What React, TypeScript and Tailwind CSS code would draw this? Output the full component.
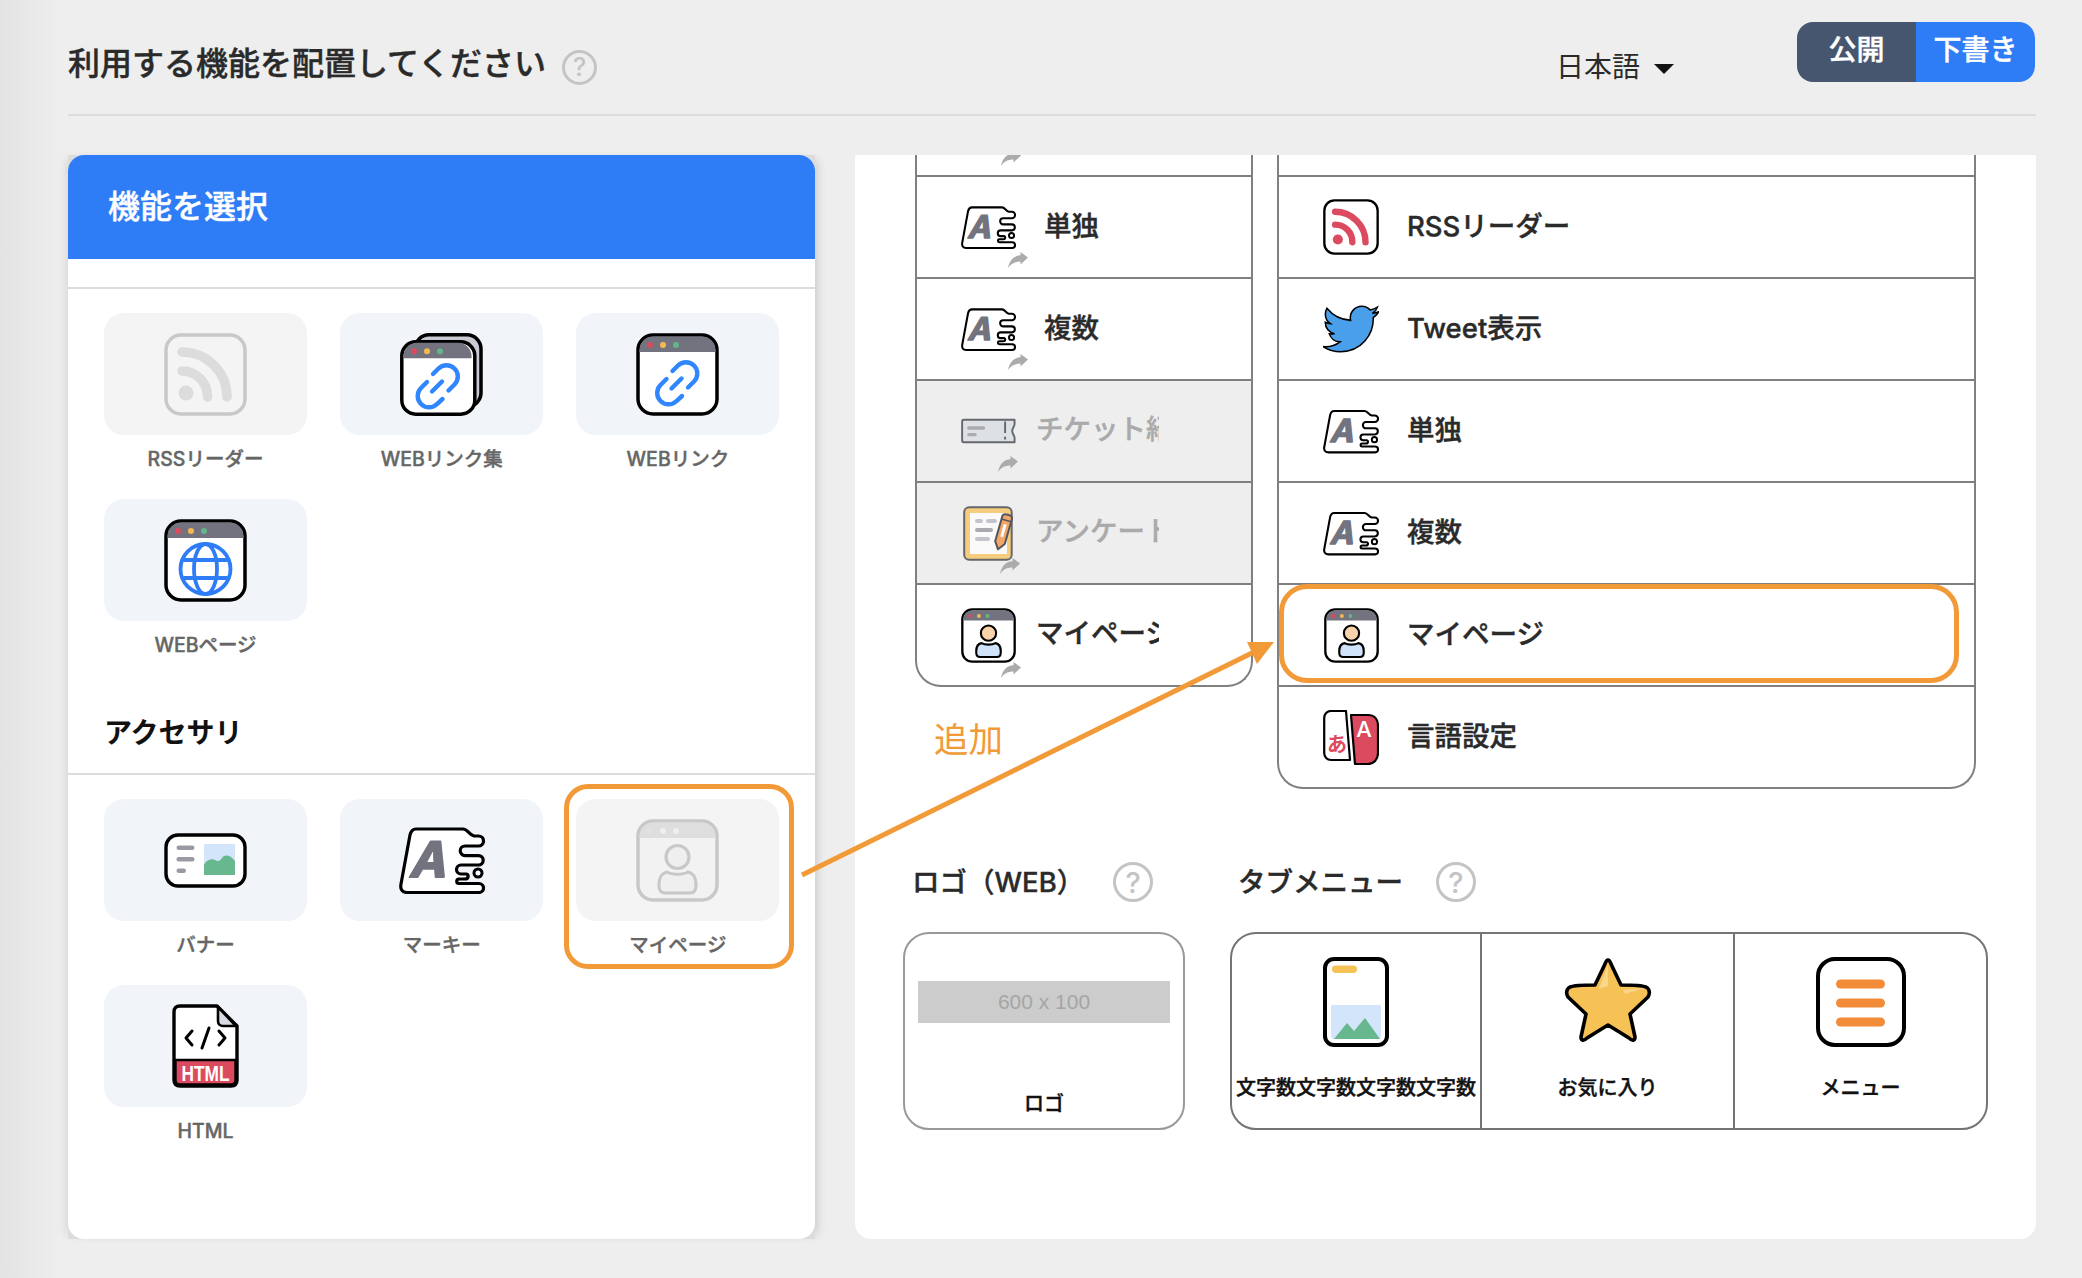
import React from "react";
import { FaTwitter } from "react-icons/fa";

const RED = "#dc4a60";
const ORANGE = "#f39a38";
// the CJK family has no real medium cut here, so thicken the regular a little
const MEDIUM = "font-medium [-webkit-text-stroke:0.4px]";

function TitleBar({ muted, width = 83, dx = 0, dy = 0 }: { muted?: boolean; width?: number; dx?: number; dy?: number }) {
  const w = width;
  return (
    <g transform={`translate(${dx} ${dy})`}>
      <path d={`M3.5 19V17A13.5 13.5 0 0 1 17 3.5H${w - 17}A13.5 13.5 0 0 1 ${w - 3.5} 17V19Z`} fill={muted ? "#dedede" : "#72737f"} />
      <circle cx="14" cy="12" r="3" fill={muted ? "#e2e2e2" : RED} />
      <circle cx="27" cy="12" r="3" fill={muted ? "#efefef" : "#f6b94f"} />
      <circle cx="40" cy="12" r="3" fill={muted ? "#efefef" : "#62b78a"} />
    </g>
  );
}

function Chain({ dx = 0, dy = 0 }: { dx?: number; dy?: number }) {
  return (
    <g transform={`translate(${dx} ${dy})`} fill="none" stroke="#2f86ff" strokeWidth="4.4" strokeLinecap="round">
      <path d="M52 54.5L58 48.5A11.3 11.3 0 0 0 42 32.5L36.5 38" />
      <path d="M30.5 46L24.5 52A11.3 11.3 0 0 0 40.5 68L46 63" />
      <path d="M35.5 55.5L45.5 45.5" />
    </g>
  );
}

function RssArcs({ color }: { color: string }) {
  return (
    <g fill="none" stroke={color} strokeWidth="9.5" strokeLinecap="round">
      <path d="M18 38A25.5 25.5 0 0 1 43.5 64" />
      <path d="M18 19A45 45 0 0 1 63 64" />
      <circle cx="22" cy="60" r="7.5" fill={color} stroke="none" />
    </g>
  );
}

function RssIcon({ muted, size = 83 }: { muted?: boolean; size?: number }) {
  return (
    <svg width={size} height={size} viewBox="0 0 83 83">
      <rect x="2" y="2" width="79" height="79" rx="15" fill={muted ? "#f4f4f4" : "#fff"} stroke={muted ? "#c8c8c8" : "#000"} strokeWidth="3.5" />
      <RssArcs color={muted ? "#dcdcdc" : RED} />
    </svg>
  );
}

function LinkSetIcon() {
  return (
    <svg width="83" height="83" viewBox="0 0 83 83">
      <rect x="15" y="1.8" width="66" height="72" rx="14" fill="#c9cad3" stroke="#000" strokeWidth="3.5" />
      <rect x="1.8" y="8.8" width="73" height="72.4" rx="14" fill="#fff" stroke="#000" strokeWidth="3.5" />
      <TitleBar width={75} dx={0} dy={6.3} />
      <Chain dx={-3.5} dy={3} />
    </svg>
  );
}

function LinkIcon() {
  return (
    <svg width="83" height="83" viewBox="0 0 83 83">
      <rect x="2" y="2" width="79" height="79" rx="15" fill="#fff" stroke="#000" strokeWidth="3.5" />
      <TitleBar />
      <Chain />
    </svg>
  );
}

function GlobeIcon() {
  return (
    <svg width="83" height="83" viewBox="0 0 83 83">
      <rect x="2" y="2" width="79" height="79" rx="15" fill="#fff" stroke="#000" strokeWidth="3.5" />
      <TitleBar />
      <g fill="none" stroke="#2f7df6" strokeWidth="3.8">
        <circle cx="41.5" cy="50" r="25" />
        <ellipse cx="41.5" cy="50" rx="11.5" ry="25" />
        <path d="M19.5 41H63.5M19.5 59H63.5" />
      </g>
    </svg>
  );
}

function PageUserIcon({ muted, size = 83 }: { muted?: boolean; size?: number }) {
  const line = muted ? "#c8c8c8" : "#000";
  return (
    <svg width={size} height={size} viewBox="0 0 83 83">
      <rect x="2" y="2" width="79" height="79" rx="15" fill={muted ? "#f2f2f2" : "#fff"} stroke={line} strokeWidth="3.5" />
      <TitleBar muted={muted} />
      <circle cx="41.5" cy="38" r="11.5" fill={muted ? "#efefef" : "#f8d2ab"} stroke={line} strokeWidth="3.2" />
      <path d="M31 53C36 56 47 56 52 53C57 54 60 59 60 65V67C60 71 58 74 54 74H29C25 74 23 71 23 67V65C23 59 26 54 31 53Z" fill={muted ? "#efefef" : "#cfe3fb"} stroke={line} strokeWidth="3.2" />
    </svg>
  );
}

function BannerIcon() {
  return (
    <svg width="83" height="55" viewBox="0 0 83 55">
      <rect x="2" y="2" width="79" height="51" rx="12" fill="#fff" stroke="#000" strokeWidth="3.4" />
      <g fill="#9a9aa5">
        <rect x="12.5" y="12.5" width="18" height="4.6" rx="2.3" />
        <rect x="12.5" y="24" width="18" height="4.6" rx="2.3" />
        <rect x="12.5" y="35.5" width="9.5" height="4.6" rx="2.3" />
      </g>
      <rect x="40" y="11" width="31" height="31" rx="1" fill="#d3e5fb" />
      <path d="M40 41V32C42 27 48 25 51 27C54 29 56 28 58 25C61 21 66 22 71 28V41C71 41.6 70.6 42 70 42H41C40.4 42 40 41.6 40 41Z" fill="#67b88e" />
    </svg>
  );
}

function MarqueeIcon({ width = 86, height = 67 }: { width?: number; height?: number }) {
  return (
    <svg width={width} height={height} viewBox="0 0 86 67">
      <path
        d="M17 2H64C69 2 70 8 75 9H79.5A5 5 0 0 1 79.5 19H66A4.8 4.8 0 0 0 66 28.6H79.5A4.7 4.7 0 0 1 79.5 38H62A4.5 4.5 0 0 0 62 47H67C70 47 70 52 66 52H60A2.2 2.2 0 0 0 60 56.5H80A4.5 4.5 0 0 1 80 65.5H8C3 65.5 1 62 2 57L11 8C12 4 14 2 17 2Z"
        fill="#fff"
        stroke="#000"
        strokeWidth="3.2"
        strokeLinejoin="round"
      />
      <circle cx="79" cy="46" r="4" fill="#fff" stroke="#000" strokeWidth="3" />
      <text x="6" y="50" transform="skewX(-14) translate(16 0)" fontFamily="Inter, sans-serif" fontWeight="700" fontSize="49" fill="#72737f" stroke="#72737f" strokeWidth="2" strokeLinejoin="round">
        A
      </text>
    </svg>
  );
}

function HtmlIcon() {
  return (
    <svg width="67" height="84" viewBox="0 0 67 84">
      <path d="M8 2H45L65 22V76C65 80 63 82 59 82H8C4 82 2 80 2 76V8C2 4 4 2 8 2Z" fill="#fff" stroke="#000" strokeWidth="3.4" strokeLinejoin="round" />
      <path d="M46 3L64 22H51C48 22 46 20 46 17Z" fill="#d9dbe3" stroke="#000" strokeWidth="2.6" strokeLinejoin="round" />
      <path d="M3.5 56H63.5V76C63.5 79 62 80.5 59 80.5H8C5 80.5 3.5 79 3.5 76Z" fill={RED} stroke="#000" strokeWidth="2.4" />
      <path d="M20 27L14 34L20 41M47 27L53 34L47 41M37 24L30 44" fill="none" stroke="#000" strokeWidth="3" strokeLinecap="round" strokeLinejoin="round" />
      <text x="33.5" y="77.2" textAnchor="middle" fontFamily="'Liberation Sans', sans-serif" fontWeight="700" fontSize="22" textLength="48" lengthAdjust="spacingAndGlyphs" fill="#fff">
        HTML
      </text>
    </svg>
  );
}

function TicketIcon() {
  return (
    <svg width="58" height="26" viewBox="0 0 58 26">
      <path d="M3 1.2H56.5V6C56.5 8 54 10 54 13C54 16 56.5 18 56.5 20V24.8H3C1.8 24.8 1.2 24 1.2 23V3C1.2 2 1.8 1.2 3 1.2Z" fill="#dde0e4" stroke="#66676c" strokeWidth="2" strokeLinejoin="round" />
      <path d="M46.5 3V15M46.5 19V22" stroke="#66676c" strokeWidth="2" fill="none" />
      <rect x="6.5" y="8" width="19" height="3.6" rx="1.8" fill="#a9abb1" />
      <rect x="6.5" y="15" width="10" height="3.6" rx="1.8" fill="#a9abb1" />
    </svg>
  );
}

function SurveyIcon() {
  return (
    <svg width="52" height="55" viewBox="0 0 52 55" className="ml-[1px]">
      <rect x="1.2" y="1.2" width="47.5" height="52.6" rx="5" fill="#f6cc7f" stroke="#66676c" strokeWidth="2" />
      <rect x="7" y="7" width="37" height="41" fill="#fafafa" />
      <g fill="#c4c5cc">
        <rect x="12" y="13" width="8" height="4" rx="2" />
        <rect x="23" y="13" width="11" height="4" rx="2" />
        <rect x="12" y="22" width="18" height="4" rx="2" fill="#a9abb1" />
        <rect x="12" y="31" width="15" height="4" rx="2" />
      </g>
      <g transform="rotate(16 40 26)">
        <path d="M35 11C35 9 37 8 40 8C43 8 45 9 45 11V37L40 44L35 37Z" fill="#f2a768" stroke="#55565b" strokeWidth="2" strokeLinejoin="round" />
        <rect x="38.5" y="18" width="3" height="13" fill="#fafafa" />
        <path d="M35 14H45" stroke="#55565b" strokeWidth="1.5" />
      </g>
    </svg>
  );
}

function LangIcon() {
  return (
    <svg width="56" height="55" viewBox="0 0 56 55">
      <path d="M28 5L32 54H45C51 54 55 49 55 43V16C55 9 51 5 45 5Z" fill={RED} stroke="#000" strokeWidth="2.2" strokeLinejoin="round" />
      <path d="M8 1H23L27 50H8C4 50 1.2 47 1.2 43V8C1.2 4 4 1 8 1Z" fill="#fff" stroke="#000" strokeWidth="2.2" strokeLinejoin="round" />
      <text x="14" y="42" textAnchor="middle" fontFamily="'Noto Sans CJK JP', sans-serif" fontWeight="700" fontSize="20" fill={RED}>
        あ
      </text>
      <text x="41" y="27" textAnchor="middle" fontFamily="Inter, sans-serif" fontWeight="500" fontSize="22" fill="#fff">
        A
      </text>
    </svg>
  );
}

function PhoneIcon() {
  return (
    <svg width="66" height="90" viewBox="0 0 66 90">
      <rect x="2" y="2" width="62" height="86" rx="9" fill="#fff" stroke="#000" strokeWidth="4" />
      <rect x="9" y="8.5" width="25" height="7.5" rx="3.7" fill="#f6c155" />
      <rect x="8" y="48" width="50" height="34" rx="2" fill="#d3e5fb" />
      <path d="M11 82L24 66L31 74L42 61L57 82Z" fill="#67b88e" strokeLinejoin="round" />
    </svg>
  );
}

function StarIcon() {
  return (
    <svg width="88" height="86" viewBox="-1 -1 88 86" className="overflow-visible">
      <path d="M43 2C44 2 45 3 46 6L56 27C65 27 76 27 81 29C85 31 85 36 83 39L65 56L70 79C70 83 67 83 64 80L43 67L22 80C19 83 16 83 16 79L21 56L3 39C1 36 1 31 5 29C10 27 21 27 30 27L40 6C41 3 42 2 43 2Z" fill="#f6c155" stroke="#000" strokeWidth="3.6" strokeLinejoin="round" />
      <path d="M43 6L34 31L43 28ZM58 32L80 30L60 36Z" fill="#fad58c" />
    </svg>
  );
}

function MenuIcon() {
  return (
    <svg width="90" height="90" viewBox="0 0 90 90">
      <rect x="2" y="2" width="86" height="86" rx="17" fill="#fff" stroke="#000" strokeWidth="4" />
      <g fill="#f28c38">
        <rect x="20" y="22.5" width="49" height="9" rx="4.5" />
        <rect x="20" y="41.5" width="49" height="9" rx="4.5" />
        <rect x="20" y="60.5" width="49" height="9" rx="4.5" />
      </g>
    </svg>
  );
}

function ShareArrow({ className }: { className: string }) {
  return (
    <svg width="20" height="16" viewBox="0 0 20 16" className={`absolute ${className}`}>
      <path d="M20 5.5L12.5 0V3.3C6 3.7 1.5 8 0 16C3 11.5 7 9.5 12.5 9.5V12.5Z" fill="#ababab" />
    </svg>
  );
}

function HelpMark({ size }: { size: "sm" | "lg" }) {
  return (
    <div
      className={
        size === "sm"
          ? "flex h-[35px] w-[35px] shrink-0 items-center justify-center rounded-full border-[3px] border-[#c4c4c4] text-[25px] leading-none font-medium text-[#c4c4c4]"
          : "flex h-[40px] w-[40px] shrink-0 items-center justify-center rounded-full border-[3px] border-[#c4c4c4] text-[29px] leading-none font-medium text-[#c4c4c4]"
      }
    >
      ?
    </div>
  );
}

function Tile({ label, muted, icon }: { label: string; muted?: boolean; icon: React.ReactNode }) {
  return (
    <div className="h-[186px]">
      <div className={`flex h-[122px] items-center justify-center rounded-[20px] ${muted ? "bg-[#f4f4f4]" : "bg-[#f1f4f9]"}`}>{icon}</div>
      <div className={`mt-[10px] text-center text-[19.5px] leading-[28px] text-[#666666] ${MEDIUM}`}>{label}</div>
    </div>
  );
}

function SideRow({
  icon,
  label,
  muted,
  arrow,
  inset,
}: {
  icon: React.ReactNode;
  label: string;
  muted?: boolean;
  arrow: string;
  inset?: boolean;
}) {
  return (
    <div className={`flex h-[102px] items-center border-b-2 border-[#808080] pl-[44px] last:h-[100px] last:rounded-b-[26px] last:border-b-0 ${muted ? "bg-[#eeeeee]" : ""}`}>
      <div className="relative flex h-[55px] w-[55px] shrink-0 items-center justify-center">
        {icon}
        <ShareArrow className={arrow} />
      </div>
      <div
        className={`ml-[20px] w-[123px] overflow-hidden text-[27.5px] leading-[36px] whitespace-nowrap ${MEDIUM} ${inset ? "-translate-y-[1px] pl-[8px]" : "-translate-y-[2px]"} ${muted ? "text-[#aaaaaa]" : "text-[#2a2a2a]"}`}
      >
        {label}
      </div>
    </div>
  );
}

function MainRow({ icon, label, picked }: { icon: React.ReactNode; label: string; picked?: boolean }) {
  return (
    <div className="relative flex h-[102px] items-center border-b-2 border-[#808080] pl-[44px] last:h-[100px] last:border-b-0">
      <div className="flex h-[55px] w-[56px] shrink-0 items-center justify-center">{icon}</div>
      <div className={`ml-[28px] -translate-y-[1px] text-[27.5px] leading-[36px] whitespace-nowrap text-[#2a2a2a] ${MEDIUM}`}>{label}</div>
      {picked && <div className="absolute top-[-1px] left-0 h-[99px] w-[680px] rounded-[28px] border-[5px] border-[#f39a38]" />}
    </div>
  );
}

export default function App() {
  return (
    <div className="relative h-[1278px] w-[2082px] overflow-hidden bg-[linear-gradient(to_right,#e3e3e3,#eeeeee_60px)] pr-[46px] pl-[68px] font-[family-name:Inter,'Noto_Sans_CJK_JP',sans-serif] text-[#2a2a2a]">
      <div className="flex h-[116px] items-start border-b-2 border-[#dddddd]">
        <h1 className={`mt-[44px] text-[32px] leading-[40px] ${MEDIUM}`}>利用する機能を配置してください</h1>
        <div className="mt-[50px] ml-[16px]">
          <HelpMark size="sm" />
        </div>
        <div className="mt-[47px] ml-auto text-[28px] leading-[40px] font-normal">日本語</div>
        <svg width="20" height="10" viewBox="0 0 20 10" className="mt-[64px] ml-[14px]">
          <path d="M0 0H20L10 10Z" fill="#111111" />
        </svg>
        <div className={`mt-[22px] mr-[1px] ml-[123px] flex h-[60px] w-[238px] overflow-hidden rounded-[16px] text-[28px] text-white ${MEDIUM}`}>
          <div className="flex w-[119px] items-center justify-center bg-[#46566f] pb-[4px]">公開</div>
          <div className="flex w-[119px] items-center justify-center bg-[#2f7df6] pb-[4px]">下書き</div>
        </div>
      </div>

      <div className="mt-[39px] flex h-[1084px] gap-[40px]">
        {/* 機能一覧 */}
        <div className="w-[747px] shrink-0 bg-[#dcdcdc] shadow-[7px_0_9px_-5px_rgba(0,0,0,0.16),-7px_0_9px_-5px_rgba(0,0,0,0.1)]">
          <div className="h-full rounded-[16px] bg-white">
            <div className={`flex h-[104px] items-center rounded-t-[16px] bg-[#2f7df6] pl-[40px] text-[32px] text-white ${MEDIUM}`}>機能を選択</div>
            <div className="h-[30px] border-b-2 border-[#dddddd]" />
            <div className="grid grid-cols-[203px_203px_203px] gap-x-[33.2px] pt-[24px] pl-[36px]">
              <Tile label="RSSリーダー" muted icon={<RssIcon muted />} />
              <Tile label="WEBリンク集" icon={<LinkSetIcon />} />
              <Tile label="WEBリンク" icon={<LinkIcon />} />
              <Tile label="WEBページ" icon={<GlobeIcon />} />
            </div>
            <div className="flex h-[90px] items-end border-b-2 border-[#dddddd] pb-[22px] pl-[36px] text-[28px] leading-[36px] font-semibold text-[#111111]">アクセサリ</div>
            <div className="grid grid-cols-[203px_203px_203px] gap-x-[33.2px] pt-[24px] pl-[36px]">
              <Tile label="バナー" icon={<BannerIcon />} />
              <Tile label="マーキー" icon={<MarqueeIcon />} />
              <div className="relative">
                <Tile label="マイページ" muted icon={<PageUserIcon muted />} />
                <div className="absolute top-[-15px] right-[-15px] bottom-[16px] left-[-12px] rounded-[24px] border-[5px] border-[#f39a38]" />
              </div>
              <Tile label="HTML" icon={<HtmlIcon />} />
            </div>
          </div>
        </div>

        {/* 配置エリア */}
        <div className="flex-1 rounded-b-[16px] bg-white pl-[60px]">
          <div className="flex items-start gap-[24px]">
            <div className="w-[338px] shrink-0">
              <div className="rounded-b-[26px] border-x-2 border-b-2 border-[#808080]">
                <div className="relative h-[22px] overflow-hidden border-b-2 border-[#808080]">
                  <ShareArrow className="top-[-5px] left-[84px]" />
                </div>
                <SideRow icon={<MarqueeIcon width={57} height={45} />} label="単独" arrow="top-[52px] left-[47px]" inset />
                <SideRow icon={<MarqueeIcon width={57} height={45} />} label="複数" arrow="top-[52px] left-[47px]" inset />
                <SideRow icon={<TicketIcon />} label="チケット紹介" muted arrow="top-[52px] left-[37px]" />
                <SideRow icon={<SurveyIcon />} label="アンケート" muted arrow="top-[52px] left-[39px]" />
                <SideRow icon={<PageUserIcon size={55} />} label="マイページ" arrow="top-[54px] left-[40px]" />
              </div>
              <div className="mt-[33px] pl-[19px] text-[34.5px] leading-[40px] text-[#f39a38]">追加</div>
            </div>
            <div className="w-[699px] shrink-0 rounded-b-[26px] border-x-2 border-b-2 border-[#808080]">
              <div className="h-[22px] border-b-2 border-[#808080]" />
              <MainRow icon={<RssIcon size={56} />} label="RSSリーダー" />
              <MainRow icon={<FaTwitter size={56} fill="#4a9fea" stroke="#000000" strokeWidth={14} />} label="Tweet表示" />
              <MainRow icon={<MarqueeIcon width={57} height={45} />} label="単独" />
              <MainRow icon={<MarqueeIcon width={57} height={45} />} label="複数" />
              <MainRow icon={<PageUserIcon size={55} />} label="マイページ" picked />
              <MainRow icon={<LangIcon />} label="言語設定" />
            </div>
          </div>

          <div className="mt-[73px] ml-[-12px] flex gap-[45px]">
            <div className="w-[282px] shrink-0">
              <div className="flex h-[40px] items-center pl-[9px]">
                <span className={`text-[27.5px] leading-[36px] ${MEDIUM}`}>ロゴ（WEB）</span>
                <div className="ml-[29px]">
                  <HelpMark size="lg" />
                </div>
              </div>
              <div className="mt-[30px] flex h-[198px] flex-col items-center rounded-[26px] border-2 border-[#999999] px-[13px] pt-[47px]">
                <div className="flex h-[42px] w-full items-center justify-center bg-[#cccccc] font-[family-name:'Liberation_Sans',sans-serif] text-[21px] text-[#a5a5a5]">600 x 100</div>
                <div className={`mt-[67px] text-[20px] leading-[28px] text-[#111111] ${MEDIUM}`}>ロゴ</div>
              </div>
            </div>
            <div className="w-[758px] shrink-0">
              <div className="flex h-[40px] items-center pl-[8px]">
                <span className={`text-[27.5px] leading-[36px] ${MEDIUM}`}>タブメニュー</span>
                <div className="ml-[33px]">
                  <HelpMark size="lg" />
                </div>
              </div>
              <div className="mt-[30px] flex h-[198px] rounded-[26px] border-2 border-[#757575]">
                <div className="flex w-[250px] flex-col items-center border-r-2 border-[#757575] pt-[23px]">
                  <PhoneIcon />
                  <div className={`mt-[27px] text-[20px] leading-[28px] whitespace-nowrap text-[#111111] ${MEDIUM}`}>文字数文字数文字数文字数</div>
                </div>
                <div className="flex w-[253px] flex-col items-center border-r-2 border-[#757575] pt-[23px]">
                  <StarIcon />
                  <div className={`mt-[31px] text-[20px] leading-[28px] text-[#111111] ${MEDIUM}`}>お気に入り</div>
                </div>
                <div className="flex flex-1 flex-col items-center pt-[23px]">
                  <MenuIcon />
                  <div className={`mt-[27px] text-[20px] leading-[28px] text-[#111111] ${MEDIUM}`}>メニュー</div>
                </div>
              </div>
            </div>
          </div>
        </div>
      </div>

      {/* 追加の矢印 */}
      <svg width="2082" height="1278" viewBox="0 0 2082 1278" className="pointer-events-none absolute inset-0">
        <path d="M802 875L1256 651" stroke={ORANGE} strokeWidth="5" fill="none" />
        <path d="M1247 642H1274L1257 664Z" fill={ORANGE} />
      </svg>
    </div>
  );
}
